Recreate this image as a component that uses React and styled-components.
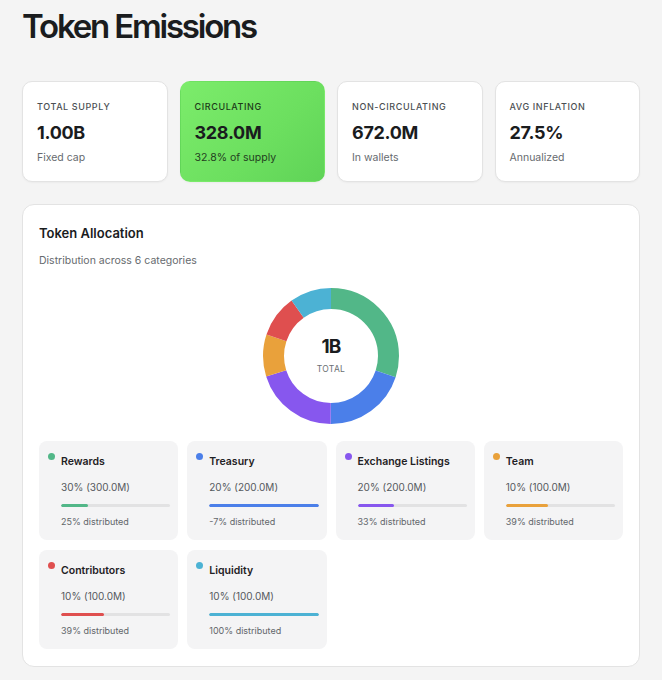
import React from "react";
import styled, { createGlobalStyle } from "styled-components";

const Global = createGlobalStyle`
  html, body { margin: 0; padding: 0; background: #f4f4f4; }
  body { font-family: Inter, "Noto Sans", "Liberation Sans", sans-serif; color: #1b1d1f; -webkit-font-smoothing: antialiased; }
  * { box-sizing: border-box; }
`;

const Page = styled.div`
  padding: 6px 22px 13px 22px;
  width: 662px;
`;

const Title = styled.h1`
  margin: 0;
  font-size: 33px;
  line-height: 40px;
  font-weight: 600;
  letter-spacing: -2.2px;
  color: #1a1c1e;
`;

const StatRow = styled.div`
  margin-top: 35px;
  display: grid;
  grid-template-columns: repeat(4, 1fr);
  gap: 12px;
`;

const StatCard = styled.div`
  height: 101px;
  border-radius: 10px;
  padding: 19px 14px 0 14px;
  border: 1px solid ${(p) => (p.$accent ? "transparent" : "#e3e3e3")};
  background: ${(p) =>
    p.$accent ? "linear-gradient(135deg, #7cec6b 0%, #6cdf5f 60%, #5fd357 100%)" : "#ffffff"};
  box-shadow: 0 1px 2px rgba(0, 0, 0, 0.04);
`;

const StatLabel = styled.div`
  font-size: 9px;
  line-height: 12px;
  font-weight: 500;
  letter-spacing: 0.6px;
  text-transform: uppercase;
  color: ${(p) => (p.$accent ? "#1d3a18" : "#4b4f53")};
`;

const StatValue = styled.div`
  margin-top: 9px;
  font-size: 18px;
  line-height: 22px;
  font-weight: 700;
  letter-spacing: -0.3px;
  color: #1a1c1e;
`;

const StatSub = styled.div`
  margin-top: 7px;
  font-size: 10.5px;
  line-height: 14px;
  color: ${(p) => (p.$accent ? "#24401f" : "#666a6e")};
`;

const Panel = styled.section`
  margin-top: 22px;
  background: #ffffff;
  border: 1px solid #e3e3e3;
  border-radius: 12px;
  padding: 19px 16px 17px 16px;
`;

const PanelTitle = styled.h2`
  margin: 0;
  font-size: 13px;
  line-height: 18px;
  font-weight: 600;
  color: #1a1c1e;
`;

const PanelSub = styled.p`
  margin: 11px 0 0 0;
  font-size: 10.5px;
  line-height: 16px;
  color: #666a6e;
`;

const DonutWrap = styled.div`
  margin: 19px auto 0 auto;
  width: 136px;
  height: 136px;
  position: relative;
`;

const DonutCenter = styled.div`
  position: absolute;
  inset: 0;
  display: flex;
  flex-direction: column;
  align-items: center;
  justify-content: center;
  padding-bottom: 3px;
`;

const DonutBig = styled.div`
  font-size: 19px;
  line-height: 22px;
  font-weight: 700;
  letter-spacing: -0.8px;
  color: #1a1c1e;
`;

const DonutSmall = styled.div`
  margin-top: 6px;
  font-size: 8.5px;
  line-height: 10px;
  letter-spacing: 0.3px;
  color: #6b6f73;
`;

const Grid = styled.div`
  margin-top: 17px;
  display: grid;
  grid-template-columns: repeat(4, 1fr);
  column-gap: 9px;
  row-gap: 10px;
`;

const AllocCard = styled.div`
  height: 99px;
  background: #f4f4f5;
  border-radius: 8px;
  padding: 12px 8px 0 9px;
  display: flex;
  gap: 6px;
`;

const Dot = styled.span`
  flex: none;
  width: 7px;
  height: 7px;
  border-radius: 50%;
  margin-top: 0px;
  background: ${(p) => p.$color};
`;

const AllocBody = styled.div`
  flex: 1;
  display: flex;
  flex-direction: column;
`;

const AllocName = styled.div`
  font-size: 10.5px;
  line-height: 16px;
  font-weight: 600;
  color: #1f2124;
  margin-top: 1px;
`;

const AllocPct = styled.div`
  margin-top: 9px;
  font-size: 10px;
  line-height: 16px;
  color: #55595d;
`;

const Track = styled.div`
  margin-top: 9px;
  height: 3px;
  border-radius: 2px;
  background: #e2e2e3;
  overflow: hidden;
`;

const Fill = styled.div`
  height: 100%;
  border-radius: 2px;
  background: ${(p) => p.$color};
`;

const AllocDist = styled.div`
  margin-top: 7px;
  font-size: 9px;
  line-height: 16px;
  color: #62666a;
`;

const stats = [
  { label: "Total Supply", value: "1.00B", sub: "Fixed cap" },
  { label: "Circulating", value: "328.0M", sub: "32.8% of supply", accent: true },
  { label: "Non-Circulating", value: "672.0M", sub: "In wallets" },
  { label: "Avg Inflation", value: "27.5%", sub: "Annualized" },
];

const allocations = [
  { name: "Rewards", pct: 30, amt: "300.0M", dist: 25, color: "#52b788" },
  { name: "Treasury", pct: 20, amt: "200.0M", dist: -7, color: "#4b7fe9" },
  { name: "Exchange Listings", pct: 20, amt: "200.0M", dist: 33, color: "#8757ee" },
  { name: "Team", pct: 10, amt: "100.0M", dist: 39, color: "#e9a13b" },
  { name: "Contributors", pct: 10, amt: "100.0M", dist: 39, color: "#df4f4f" },
  { name: "Liquidity", pct: 10, amt: "100.0M", dist: 100, color: "#4cb2d4" },
];

function Donut() {
  const r = 57.5;
  const c = 2 * Math.PI * r;
  let offset = 0;
  return (
    <svg width="136" height="136" viewBox="0 0 136 136">
      <g transform="rotate(-90 68 68)">
        {allocations.map((a) => {
          const len = (a.pct / 100) * c;
          const el = (
            <circle
              key={a.name}
              cx="68"
              cy="68"
              r={r}
              fill="none"
              stroke={a.color}
              strokeWidth="21"
              strokeDasharray={`${len} ${c - len}`}
              strokeDashoffset={-offset}
            />
          );
          offset += len;
          return el;
        })}
      </g>
    </svg>
  );
}

export default function App() {
  return (
    <>
      <Global />
      <Page>
        <Title>Token Emissions</Title>
        <StatRow>
          {stats.map((s) => (
            <StatCard key={s.label} $accent={s.accent}>
              <StatLabel $accent={s.accent}>{s.label}</StatLabel>
              <StatValue>{s.value}</StatValue>
              <StatSub $accent={s.accent}>{s.sub}</StatSub>
            </StatCard>
          ))}
        </StatRow>
        <Panel>
          <PanelTitle>Token Allocation</PanelTitle>
          <PanelSub>Distribution across 6 categories</PanelSub>
          <DonutWrap>
            <Donut />
            <DonutCenter>
              <DonutBig>1B</DonutBig>
              <DonutSmall>TOTAL</DonutSmall>
            </DonutCenter>
          </DonutWrap>
          <Grid>
            {allocations.map((a) => (
              <AllocCard key={a.name}>
                <Dot $color={a.color} />
                <AllocBody>
                  <AllocName>{a.name}</AllocName>
                  <AllocPct>
                    {a.pct}% ({a.amt})
                  </AllocPct>
                  <Track>
                    <Fill $color={a.color} style={{ width: `${Math.max(0, Math.min(100, a.dist < 0 ? 100 : a.dist))}%` }} />
                  </Track>
                  <AllocDist>{a.dist}% distributed</AllocDist>
                </AllocBody>
              </AllocCard>
            ))}
          </Grid>
        </Panel>
      </Page>
    </>
  );
}
